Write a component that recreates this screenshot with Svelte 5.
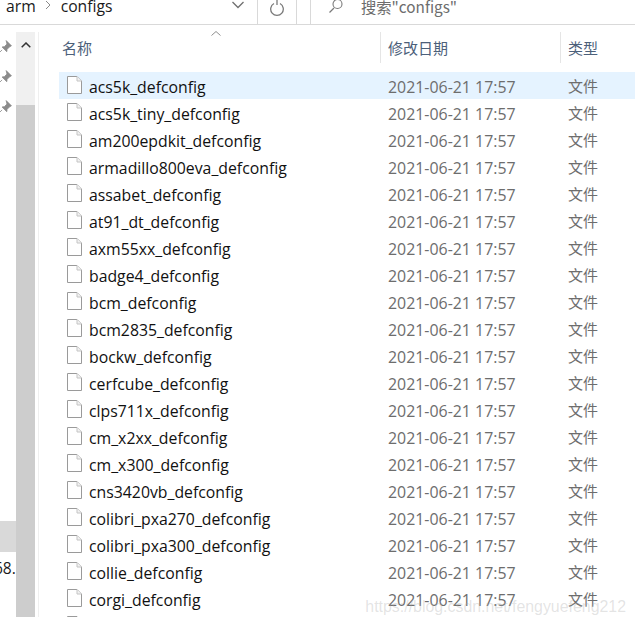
<script>
  const files = ['acs5k','acs5k_tiny','am200epdkit','armadillo800eva','assabet','at91_dt','axm55xx','badge4','bcm','bcm2835','bockw','cerfcube','clps711x','cm_x2xx','cm_x300','cns3420vb','colibri_pxa270','colibri_pxa300','collie','corgi'].map((n) => n + '_defconfig');
</script>

<div class="window">
  <header class="toolbar">
    <div class="address">
      <span class="crumb">arm</span>
      <svg class="sep" width="8" height="10" viewBox="0 0 8 10"><path d="M2 1l4 4-4 4" fill="none" stroke="#8a8a8a" stroke-width="1"/></svg>
      <span class="crumb">configs</span>
      <svg class="chev" width="14" height="8" viewBox="0 0 14 8"><path d="M1.500 1l5.500 5.500L12.500 1" fill="none" stroke="#707070" stroke-width="1.300"/></svg>
      <div class="refresh">
        <svg width="16" height="18" viewBox="0 0 16 18"><path d="M5 3.500A6.300 6.300 0 1 0 11 3.500M8 -1v6" fill="none" stroke="#7a7a7a" stroke-width="1.300"/></svg>
      </div>
    </div>
    <div class="search">
      <svg width="16" height="14" viewBox="0 0 16 14"><circle cx="9.500" cy="4" r="4.500" fill="none" stroke="#7a7a7a" stroke-width="1.100"/><path d="M6 8l-4.500 4.500" stroke="#7a7a7a" stroke-width="1.200"/></svg>
      <span>搜索"configs"</span>
    </div>
  </header>

  <div class="body">
    <aside class="nav">
      <div class="pins">
        {#each [0, 1, 2] as p (p)}
          <svg width="14" height="14" viewBox="0 0 12 12"><path d="M7 0.500l4.500 4.500-1.500.8-2.200 2.200-.3 2-4-4 2-.3 2.200-2.200zM3.500 8.500L0.500 11.500" fill="#8b8b8b" stroke="#8b8b8b" stroke-width=".7"/></svg>
        {/each}
      </div>
      <div class="nav-selected"></div>
      <div class="nav-text">68.</div>
    </aside>
    <div class="scrollbar">
      <div class="arrow"><svg width="10" height="6" viewBox="0 0 10 6"><path d="M.7 5.300L5 1l4.300 4.300" fill="none" stroke="#333" stroke-width="1.500"/></svg></div>
      <div class="thumb"></div>
    </div>
    <main class="list">
      <div class="head">
        <svg class="sort" width="10" height="5" viewBox="0 0 10 5"><path d="M.5 4.500L5 .5l4.500 4" fill="none" stroke="#8f8f8f"/></svg>
        <div class="col name">名称</div>
        <div class="col date">修改日期</div>
        <div class="col type">类型</div>
      </div>
      <div class="rows">
        {#each files as f, i (f)}
          <div class="row" class:sel={i === 0}>
            <div class="fname">
              <svg width="15" height="18" viewBox="0 0 15 18"><path d="M.5.500h9.500l4.500 4.500v12.500H.5z" fill="#fff" stroke="#9a9a9a"/><path d="M10 .5V5h4.500" fill="#f2f2f2" stroke="#c4c4c4"/></svg>
              <span>{f}</span>
            </div>
            <div class="fdate">2021-06-21 17:57</div>
            <div class="ftype">文件</div>
          </div>
        {/each}
        <div class="row cut"><div class="fname"><svg width="15" height="18" viewBox="0 0 15 18"><path d="M.5.500h9.500l4.500 4.500v12.500H.5z" fill="#fff" stroke="#9a9a9a"/></svg></div></div>
      </div>
      <div class="watermark">https://blog.csdn.net/fengyuefeng212</div>
    </main>
  </div>
</div>

<style>
  :global(body) { margin: 0; background: #fff; }
  .window {
    width: 635px; height: 617px; overflow: hidden; display: flex; flex-direction: column;
    font-family: "Open Sans", "Noto Sans CJK SC", sans-serif; background: #fff;
  }
  .toolbar { height: 25px; flex: none; display: flex; border-bottom: 1px solid #d9d9d9; box-sizing: border-box; gap: 13px; }
  .address { width: 297px; flex: none; box-sizing: border-box; border-right: 1px solid #d9d9d9; display: flex; align-items: center; padding-left: 6px; color: #1a1a1a; font-size: 15.700px; }
  .crumb { position: relative; top: -6px; line-height: 20px; }
  .sep { margin: 0 9px 0 8px; position: relative; top: -7px; }
  .chev { margin-left: auto; position: relative; top: -7px; }
  .refresh { width: 38px; margin-left: 12px; height: 24px; border-left: 1px solid #d9d9d9; display: flex; align-items: flex-start; justify-content: center; }
  .search { flex: 1; border-left: 1px solid #d9d9d9; display: flex; padding-left: 17px; gap: 17px; color: #6d6d6d; font-size: 15.300px; line-height: 14px; align-items: flex-start; font-family: "Noto Sans CJK SC", sans-serif; }
  .search span { position: relative; top: -1px; }
  .body { flex: 1; display: flex; min-height: 0; }
  .nav { width: 16px; flex: none; display: flex; flex-direction: column; }
  .pins { display: flex; flex-direction: column; gap: 16px; margin: 15px 0 0 -2px; }
  .pins svg { display: block; }
  .nav-selected { height: 31px; background: #d9d9d9; margin-top: 407px; }
  .nav-text { font-size: 15.500px; margin: 6px 0 0 -6px; color: #1a1a1a; line-height: 20px; white-space: nowrap; }
  .scrollbar { width: 19px; margin-top: 7px; background: #f0f0f0; flex: none; display: flex; flex-direction: column; position: relative; }
  .arrow { height: 73px; display: flex; justify-content: center; padding-top: 10px; box-sizing: border-box; }
  .thumb { flex: 1; background: #cdcdcd; }
  .list { flex: 1; position: relative; margin-top: 7px; margin-left: 3px; border-left: 1px solid #efefef; min-width: 0; padding-left: 20px; }
  .head { height: 31px; display: grid; grid-template-columns: 321px 180px 1fr; font-size: 15px; color: #4c607a; position: relative; font-family: "Noto Sans CJK SC", sans-serif; margin-bottom: 9px; }
  .sort { position: absolute; left: 152px; top: -1px; }
  .col { display: flex; align-items: center; padding-left: 8px; }
  .col.name { padding-left: 3px; }
  .date, .type { border-left: 1px solid #e5e5e5; }
  .date { padding-left: 7px; }
  .type { padding-left: 7px; }
  .rows { display: flex; flex-direction: column; }
  .row { height: 27px; flex: none; display: grid; grid-template-columns: 321px 180px 1fr; align-items: center; }
  .row.sel { background: #e5f3ff; }
  .fname { display: flex; align-items: center; gap: 7px; padding-left: 8px; color: #111; font-size: 15.800px; }
  .fname span { display: block; padding-top: 2px; }
  .fname svg { flex: none; position: relative; top: -1px; }
  .fdate { color: #6d6d6d; font-size: 15.900px; padding: 2px 0 0 8px; }
  .ftype { color: #6d6d6d; font-size: 15px; padding-left: 8px; font-family: "Noto Sans CJK SC", sans-serif; }
  .watermark { position: absolute; right: 9px; bottom: -1px; color: rgba(170,170,170,.33); font-size: 15.900px; line-height: 22px; white-space: nowrap; font-family: "Liberation Sans", sans-serif; }
</style>
